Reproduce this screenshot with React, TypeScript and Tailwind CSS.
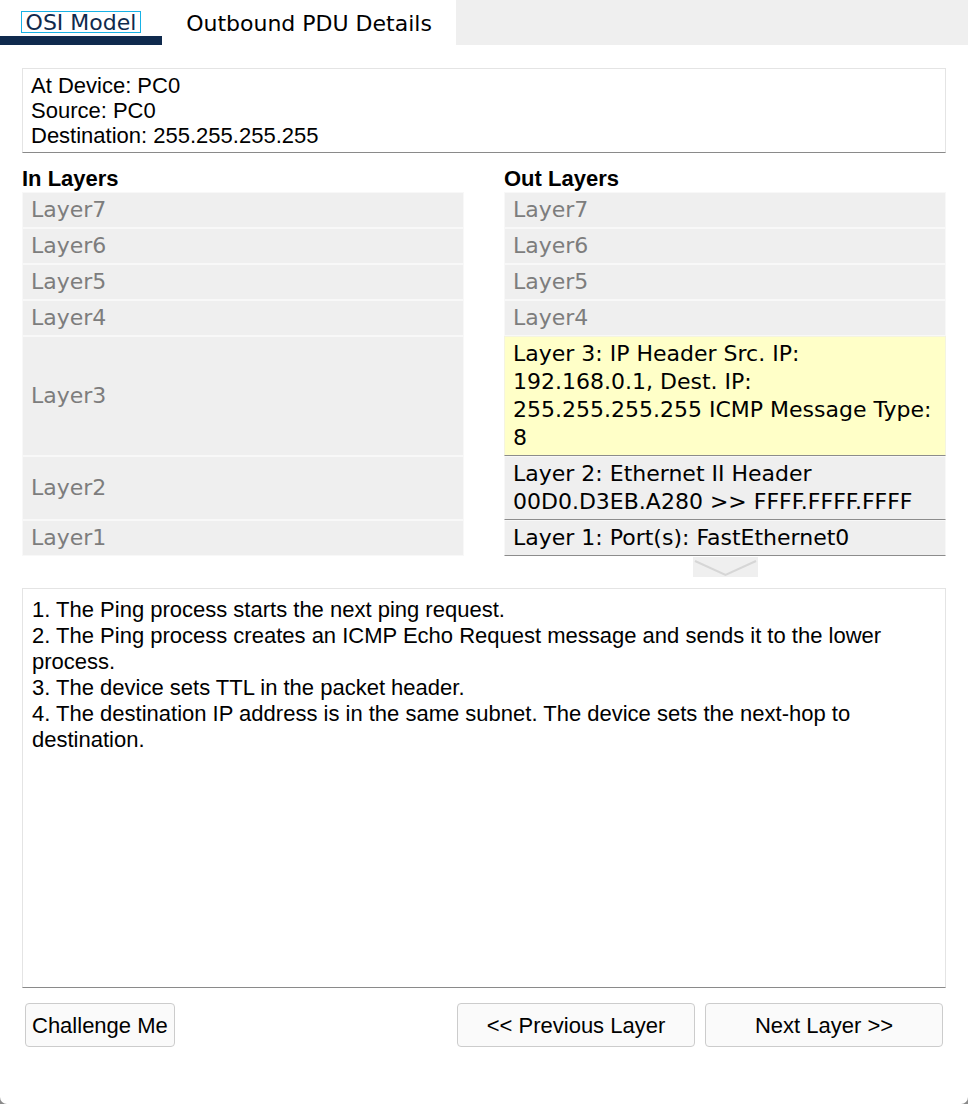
import React from 'react';

const verdana = "font-['DejaVu_Sans',Verdana,sans-serif]";
const arial = "font-['Liberation_Sans',Arial,sans-serif]";

interface LayerRow {
  inLabel: string;
  out: string;
  active?: boolean;
  highlight?: boolean;
}

const rows: LayerRow[] = [
  { inLabel: 'Layer7', out: 'Layer7' },
  { inLabel: 'Layer6', out: 'Layer6' },
  { inLabel: 'Layer5', out: 'Layer5' },
  { inLabel: 'Layer4', out: 'Layer4' },
  {
    inLabel: 'Layer3',
    out: 'Layer 3: IP Header Src. IP: 192.168.0.1, Dest. IP: 255.255.255.255 ICMP Message Type: 8',
    active: true,
    highlight: true,
  },
  {
    inLabel: 'Layer2',
    out: 'Layer 2: Ethernet II Header 00D0.D3EB.A280 >> FFFF.FFFF.FFFF',
    active: true,
  },
  { inLabel: 'Layer1', out: 'Layer 1: Port(s): FastEthernet0', active: true },
];

const steps = [
  '1. The Ping process starts the next ping request.',
  '2. The Ping process creates an ICMP Echo Request message and sends it to the lower process.',
  '3. The device sets TTL in the packet header.',
  '4. The destination IP address is in the same subnet. The device sets the next-hop to destination.',
];

const App: React.FC = () => {
  return (
    <div className="w-[968px] h-[1104px] bg-[#8a8a8a]">
      <div className="w-full h-full bg-white rounded-b-[7px] overflow-hidden flex flex-col">
        {/* Tabs */}
        <div className={`flex h-[45px] text-[22px] ${verdana}`}>
          <div className="w-[162px] flex flex-col">
            <div className="h-[36px] pt-[11px] flex justify-center">
              <span className="h-[22px] px-[4px] leading-[22px] border border-[#17b2e6] text-[#0f2a4d]">
                OSI Model
              </span>
            </div>
            <div className="h-[9px] bg-[#0f2a4d]" />
          </div>
          <div className="w-[294px] flex justify-center pt-[10px] leading-[28px] text-black">
            Outbound PDU Details
          </div>
          <div className="flex-1 bg-[#efefef]" />
        </div>

        <div className="px-[22px] pt-[23px]">
          {/* Device info */}
          <div
            className={`border border-[#e4e4e4] border-b-[#8a8a8a] px-[8px] py-[4px] text-[22px] leading-[25px] text-black ${arial}`}
          >
            <div>At Device: PC0</div>
            <div>Source: PC0</div>
            <div>Destination: 255.255.255.255</div>
          </div>

          {/* Layers */}
          <div className="grid grid-cols-2 gap-x-[40px] mt-[13px]">
            <div className={`text-[22px] font-bold leading-[26px] text-black ${arial}`}>In Layers</div>
            <div className={`text-[22px] font-bold leading-[26px] text-black ${arial}`}>Out Layers</div>
            {rows.map((r) => (
              <React.Fragment key={r.inLabel}>
                <div
                  className={`flex items-center border border-[#f8f8f8] bg-[#efefef] px-[8px] py-[3px] text-[22px] leading-[28px] text-[#7d7d7d] ${verdana}`}
                >
                  {r.inLabel}
                </div>
                <div
                  className={`flex items-center border px-[8px] py-[3px] text-[22px] leading-[28px] ${verdana} ${
                    r.highlight
                      ? 'bg-[#ffffc8] border-[#f4f4e0] border-b-[#8c8c8c] text-black'
                      : r.active
                      ? 'bg-[#efefef] border-[#f8f8f8] border-b-[#8c8c8c] text-black'
                      : 'bg-[#efefef] border-[#f8f8f8] text-[#7d7d7d]'
                  }`}
                >
                  {r.out}
                </div>
              </React.Fragment>
            ))}
            <div />
            <div className="flex justify-center pt-[1px]">
              <svg width="65" height="20" viewBox="0 0 65 20">
                <rect x="0" y="0" width="65" height="20" fill="#efefef" />
                <polyline points="2,4 32.5,18 63,4" fill="none" stroke="#d6d6d6" strokeWidth="2" />
              </svg>
            </div>
          </div>

          {/* Description */}
          <div
            className={`mt-[11px] h-[400px] border border-[#e4e4e4] border-b-[#8a8a8a] pl-[9px] pr-[12px] pt-[8px] text-[22px] leading-[26px] text-black ${arial}`}
          >
            {steps.map((s) => (
              <div key={s}>{s}</div>
            ))}
          </div>

          {/* Buttons */}
          <div className={`flex items-center mt-[15px] px-[3px] text-[22px] text-black ${arial}`}>
            <button className="h-[44px] px-[6px] rounded-[4px] border border-[#cccccc] bg-[#fafafa]">
              Challenge Me
            </button>
            <div className="flex-1" />
            <button className="w-[238px] h-[44px] rounded-[4px] border border-[#cccccc] bg-[#fafafa]">
              {'<< Previous Layer'}
            </button>
            <button className="w-[238px] h-[44px] ml-[10px] rounded-[4px] border border-[#cccccc] bg-[#fafafa]">
              {'Next Layer >>'}
            </button>
          </div>
        </div>
      </div>
    </div>
  );
};

export default App;
